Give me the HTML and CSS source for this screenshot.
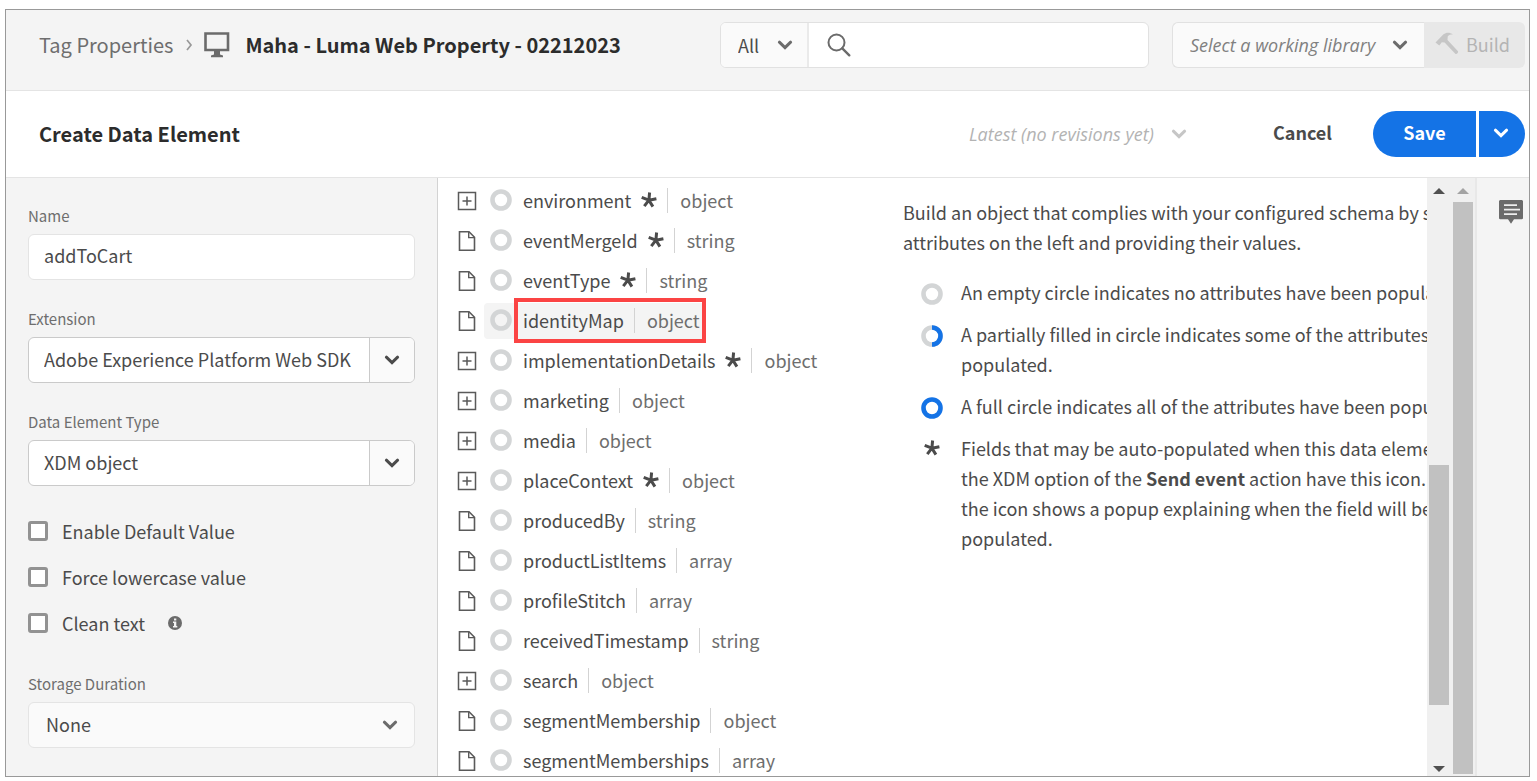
FILE: index.html
```html
<!DOCTYPE html>
<html lang="en">
<head>
<meta charset="utf-8">
<title>Create Data Element</title>
<link rel="stylesheet" href="styles.css">
</head>
<body>
<svg class="sprite" aria-hidden="true">
  <symbol id="chevron" viewBox="0 0 16 10"><path d="M2.4 2.2 8 7.6l5.600-5.400" fill="none" stroke="currentColor" stroke-width="3" stroke-linecap="round"/></symbol>
  <symbol id="plus" viewBox="0 0 20 20"><path d="M1.500 1.500h17v17h-17z" fill="none" stroke="currentColor" stroke-width="1.500"/><path d="M10 5.500v9M5.500 10h9" stroke="currentColor" stroke-width="1.500"/></symbol>
  <symbol id="file" viewBox="0 0 20 22"><path d="M2.500 1.800h9.500l5.500 5.500v12.900h-15z" fill="none" stroke="currentColor" stroke-width="1.600"/><path d="M11.700 2v5.600h5.600" fill="none" stroke="currentColor" stroke-width="1.400"/></symbol>
  <symbol id="ring" viewBox="0 0 22 22"><circle cx="11" cy="11" r="8.500" fill="none" stroke="currentColor" stroke-width="4.600"/></symbol>
  <symbol id="star" viewBox="0 0 16 16"><path d="M7.900 8.200 8.600.5M7.900 8.200l7.500-1.500M7.900 8.200l4 6.400M7.900 8.200l-4.600 6M7.900 8.200.7 5.300" fill="none" stroke="currentColor" stroke-width="3"/></symbol>
</svg>
<div class="frame">
  <header class="topbar">
    <nav class="crumbs" aria-label="Breadcrumb">
      <a href="#" class="crumb-link">Tag Properties</a>
      <svg class="crumb-sep" viewBox="0 0 8 12"><path d="m2 1 4 5-4 5" fill="none" stroke="#999" stroke-width="1.700"/></svg>
      <svg class="monitor" viewBox="0 0 28 26"><path d="M2.500 1.500h22.500v16.500H2.500z" fill="none" stroke="#6b6b6b" stroke-width="2.600"/><path d="M11 18h6v4.500l3 1v1.800H8v-1.800l3-1z" fill="#6b6b6b"/></svg>
      <strong class="crumb-current">Maha - Luma Web Property - 02212023</strong>
    </nav>
    <div class="search">
      <div class="pick search-scope">
        <select aria-label="Search scope"><option>All</option></select>
        <svg class="chevron"><use href="#chevron"/></svg>
      </div>
      <label class="search-box">
        <svg class="lens" viewBox="0 0 24 24"><circle cx="9.500" cy="9.500" r="8" fill="none" stroke="#6b6b6b" stroke-width="2"/><path d="m15.300 15.300 7 7" stroke="#6b6b6b" stroke-width="2.400" stroke-linecap="round"/></svg>
        <input type="search" aria-label="Search">
      </label>
    </div>
    <div class="library">
      <div class="pick library-pick">
        <select aria-label="Working library"><option>Select a working library</option></select>
        <svg class="chevron"><use href="#chevron"/></svg>
      </div>
      <button class="build" disabled>
        <svg class="hammer" viewBox="0 0 24 24"><path d="M.5 10.500 8.500 2.300C11 .2 14.500.1 18 2.300c-2.500 0-4.200.7-5.300 2.100L12.500 8 23 19.200c.8 1-1.500 3.600-2.700 2.600L9.600 10.500 6.800 10.300 4.300 13.500z" fill="#c6c6c6"/></svg>
        Build
      </button>
    </div>
  </header>

  <div class="titlebar">
    <h1>Create Data Element</h1>
    <div class="pick revision">
      <select aria-label="Revision" disabled><option>Latest (no revisions yet)</option></select>
      <svg class="chevron"><use href="#chevron"/></svg>
    </div>
    <button class="cancel">Cancel</button>
    <div class="save-group">
      <button class="save">Save</button>
      <button class="save-more" aria-label="More save options"><svg class="chevron"><use href="#chevron"/></svg></button>
    </div>
  </div>

  <div class="workspace">
    <form class="sidebar">
      <div class="field">
        <label for="name">Name</label>
        <input class="box text-box" id="name" type="text" value="addToCart">
      </div>
      <div class="field">
        <label for="extension">Extension</label>
        <div class="box combo">
          <input id="extension" type="text" value="Adobe Experience Platform Web SDK">
          <button type="button" aria-label="Show extensions"><svg class="chevron"><use href="#chevron"/></svg></button>
        </div>
      </div>
      <div class="field">
        <label for="type">Data Element Type</label>
        <div class="box combo">
          <input id="type" type="text" value="XDM object">
          <button type="button" aria-label="Show types"><svg class="chevron"><use href="#chevron"/></svg></button>
        </div>
      </div>
      <div class="checks">
        <label class="check"><input type="checkbox">Enable Default Value</label>
        <label class="check"><input type="checkbox">Force lowercase value</label>
        <label class="check"><input type="checkbox">Clean text
          <svg class="info" viewBox="0 0 14 14"><circle cx="7" cy="7" r="7" fill="#6b6b6b"/><path d="M6 2.500h2.300v2H6zM5 5.600h3.300v4.500h1v1.400H5v-1.400h1V7H5z" fill="#f4f4f4"/></svg>
        </label>
      </div>
      <div class="field">
        <label for="storage">Storage Duration</label>
        <div class="box pick storage">
          <select id="storage"><option>None</option></select>
          <svg class="chevron"><use href="#chevron"/></svg>
        </div>
      </div>
    </form>

    <main class="content">
      <ul class="tree">
        <li><svg class="branch"><use href="#plus"/></svg><button class="node"><svg class="ring"><use href="#ring"/></svg><span>environment</span><svg class="star"><use href="#star"/></svg><span class="kind">object</span></button></li>
        <li><svg class="leaf"><use href="#file"/></svg><button class="node"><svg class="ring"><use href="#ring"/></svg><span>eventMergeId</span><svg class="star"><use href="#star"/></svg><span class="kind">string</span></button></li>
        <li><svg class="leaf"><use href="#file"/></svg><button class="node"><svg class="ring"><use href="#ring"/></svg><span>eventType</span><svg class="star"><use href="#star"/></svg><span class="kind">string</span></button></li>
        <li><svg class="leaf"><use href="#file"/></svg><button class="node node-selected"><svg class="ring"><use href="#ring"/></svg><span>identityMap</span><span class="kind">object</span></button></li>
        <li><svg class="branch"><use href="#plus"/></svg><button class="node"><svg class="ring"><use href="#ring"/></svg><span>implementationDetails</span><svg class="star"><use href="#star"/></svg><span class="kind">object</span></button></li>
        <li><svg class="branch"><use href="#plus"/></svg><button class="node"><svg class="ring"><use href="#ring"/></svg><span>marketing</span><span class="kind">object</span></button></li>
        <li><svg class="branch"><use href="#plus"/></svg><button class="node"><svg class="ring"><use href="#ring"/></svg><span>media</span><span class="kind">object</span></button></li>
        <li><svg class="branch"><use href="#plus"/></svg><button class="node"><svg class="ring"><use href="#ring"/></svg><span>placeContext</span><svg class="star"><use href="#star"/></svg><span class="kind">object</span></button></li>
        <li><svg class="leaf"><use href="#file"/></svg><button class="node"><svg class="ring"><use href="#ring"/></svg><span>producedBy</span><span class="kind">string</span></button></li>
        <li><svg class="leaf"><use href="#file"/></svg><button class="node"><svg class="ring"><use href="#ring"/></svg><span>productListItems</span><span class="kind">array</span></button></li>
        <li><svg class="leaf"><use href="#file"/></svg><button class="node"><svg class="ring"><use href="#ring"/></svg><span>profileStitch</span><span class="kind">array</span></button></li>
        <li><svg class="leaf"><use href="#file"/></svg><button class="node"><svg class="ring"><use href="#ring"/></svg><span>receivedTimestamp</span><span class="kind">string</span></button></li>
        <li><svg class="branch"><use href="#plus"/></svg><button class="node"><svg class="ring"><use href="#ring"/></svg><span>search</span><span class="kind">object</span></button></li>
        <li><svg class="leaf"><use href="#file"/></svg><button class="node"><svg class="ring"><use href="#ring"/></svg><span>segmentMembership</span><span class="kind">object</span></button></li>
        <li><svg class="leaf"><use href="#file"/></svg><button class="node"><svg class="ring"><use href="#ring"/></svg><span>segmentMemberships</span><span class="kind">array</span></button></li>
      </ul>
      <section class="help">
        <p>Build an object that complies with your configured schema by selecting<br>attributes on the left and providing their values.</p>
        <ul class="legend">
          <li><svg class="ring"><use href="#ring"/></svg><p>An empty circle indicates no attributes have been populated.</p></li>
          <li><svg class="ring" viewBox="0 0 22 22"><circle cx="11" cy="11" r="8.500" fill="none" stroke="currentColor" stroke-width="4.600"/><path d="M11 2.500a8.500 8.500 0 0 1 0 17" fill="none" stroke="#1473e6" stroke-width="4.600"/></svg><p>A partially filled in circle indicates some of the attributes have been<br>populated.</p></li>
          <li><svg class="ring ring-full"><use href="#ring"/></svg><p>A full circle indicates all of the attributes have been populated.</p></li>
          <li><svg class="star"><use href="#star"/></svg><p>Fields that may be auto-populated when this data element is used in<br>the XDM option of the <b>Send event</b> action have this icon. Hovering over<br>the icon shows a popup explaining when the field will be auto-<br>populated.</p></li>
        </ul>
      </section>
    </main>

    <div class="scrollbar scrollbar-inner" aria-hidden="true">
      <svg class="arrow" viewBox="0 0 12 6"><path d="M0 6 6 0l6 6z" fill="#505050"/></svg>
      <div class="track"><div class="thumb"></div></div>
      <svg class="arrow" viewBox="0 0 12 6"><path d="m0 0 6 6 6-6z" fill="#505050"/></svg>
    </div>
    <div class="scrollbar scrollbar-outer" aria-hidden="true">
      <svg class="arrow" viewBox="0 0 12 6"><path d="M0 6 6 0l6 6z" fill="#a3a3a3"/></svg>
      <div class="track"><div class="thumb"></div></div>
    </div>
    <aside class="rail">
      <button aria-label="Notes"><svg class="note" viewBox="0 0 24 24"><path d="M1 0h22l1 1v17.500l-1 .7h-8L12 23.800 9 19.200H1l-1-.7V1z" fill="#6b6b6b"/><path d="M5 5.200h13M5 9.700h16M5 14.200h13" stroke="#eee" stroke-width="1.700"/></svg></button>
    </aside>
  </div>
</div>
</body>
</html>
```
FILE: styles.css
```css
*, *::before, *::after { box-sizing: border-box; }

body {
  margin: 0;
  height: 100vh;
  padding: 9px 7px 4px 5px;
  background: #fff;
  color: #4b4b4b;
  font: 18px/30px "Noto Sans CJK SC", "Open Sans", sans-serif;
}

button, input, select {
  margin: 0;
  padding: 0;
  border: 0;
  background: none;
  color: inherit;
  font: inherit;
  outline: 0;
}

select { appearance: none; opacity: 1; width: 100%; }
select:disabled { opacity: 1; color: inherit; }
p, ul, h1 { margin: 0; padding: 0; }
ul { list-style: none; }
svg { flex: none; display: block; }
b { font-weight: 600; }

.sprite { position: absolute; width: 0; height: 0; }
.chevron { width: 16px; height: 10px; color: #6b6b6b; }

.frame {
  height: 100%;
  display: flex;
  flex-direction: column;
  border: 1px solid #999;
  overflow: hidden;
}

/* Top bar */
.topbar {
  flex: none;
  display: flex;
  align-items: flex-start;
  height: 81px;
  padding: 12px 4px 0 33px;
  background: #f4f4f4;
  border-bottom: 1px solid #e4e4e4;
}

.crumbs {
  display: flex;
  align-items: center;
  height: 46px;
  margin-right: auto;
  font-size: 20px;
  white-space: nowrap;
}

.crumb-link { color: #6e6e6e; text-decoration: none; }
.crumb-sep { width: 8px; height: 12px; margin: 0 10px 0 12px; }
.monitor { width: 28px; height: 26px; margin-right: 14px; }
.crumb-current { color: #2c2c2c; font-weight: 600; }

.pick { display: flex; align-items: center; position: relative; }
.pick select { height: 100%; }
.pick .chevron { position: absolute; right: 16px; pointer-events: none; }

.search {
  display: flex;
  width: 429px;
  height: 46px;
  margin-right: 23px;
  border: 1px solid #e1e1e1;
  border-radius: 6px;
  background: #fff;
  overflow: hidden;
}

.search-scope { width: 88px; background: #fafafa; border-right: 2px solid #eaeaea; }
.search-scope .chevron { right: 14px; }
.search-scope select { padding-left: 17px; }
.search-box { flex: 1; display: flex; align-items: center; gap: 10px; padding-left: 18px; }
.search-box input { flex: 1; min-width: 0; }
.lens { width: 24px; height: 24px; }

.library { display: flex; width: 353px; height: 46px; }
.library-pick {
  flex: 1;
  background: #fafafa;
  border: 1px solid #e1e1e1;
  border-right: 0;
  border-radius: 6px 0 0 6px;
  color: #808080;
  font-family: "Open Sans", sans-serif;
  font-style: italic;
}
.library-pick select { padding-left: 17px; }

.build {
  display: flex;
  align-items: center;
  gap: 7px;
  width: 101px;
  padding: 0 0 2px 11px;
  border-radius: 0 6px 6px 0;
  background: #e8e8e8;
  color: #b4b4b4;
}
.hammer { width: 24px; height: 24px; }

/* Title bar */
.titlebar {
  flex: none;
  display: flex;
  align-items: center;
  height: 87px;
  padding: 0 4px 0 33px;
  border-bottom: 1px solid #e4e4e4;
}

h1 { margin-right: auto; color: #2c2c2c; font-size: 20px; line-height: 30px; font-weight: 600; }
.revision {
  width: 233px;
  color: #b3b3b3;
  font-family: "Open Sans", sans-serif;
  font-style: italic;
}
.pick.revision .chevron { color: #c6c6c6; right: 15px; }
.cancel { margin: 0 41px 0 71px; padding-bottom: 4px; font-weight: 600; }

.save-group { display: flex; gap: 3px; height: 46px; color: #fff; }
.save { width: 103px; padding-bottom: 4px; border-radius: 23px 0 0 23px; background: #1473e6; font-weight: 700; }
.save-more {
  display: grid;
  place-items: center;
  width: 46px;
  padding: 0 2px 2px 0;
  border-radius: 0 23px 23px 0;
  background: #1473e6;
}
.save-more .chevron { color: #fff; }

/* Workspace */
.workspace { flex: 1; min-height: 0; display: flex; }

.sidebar {
  flex: none;
  width: 432px;
  padding: 26px 22px 0;
  background: #f4f4f4;
  border-right: 1px solid #d3d3d3;
  overflow: hidden;
}

.field { margin-bottom: 27px; }
.field > label { display: block; height: 30px; color: #6e6e6e; font-size: 15px; line-height: 24px; }

.box {
  width: 100%;
  height: 46px;
  border: 1px solid #e4e4e4;
  border-radius: 6px;
  background: #fff;
  overflow: hidden;
}
.text-box { display: block; padding: 0 15px 4px; }
.combo { display: flex; border-color: #cacaca; }
.combo input { flex: 1; min-width: 0; padding: 0 0 3px 15px; }
.combo button {
  display: grid;
  place-items: center;
  width: 45px;
  background: #fafafa;
  border-left: 1px solid #cacaca;
}
.combo .chevron { color: #4b4b4b; }
.storage { background: #fafafa; }
.storage select { padding: 0 0 2px 17px; }

.checks { margin: -5px 0 26px; }
.check { display: flex; align-items: center; height: 46px; }
.check input {
  appearance: none;
  width: 20px;
  height: 20px;
  margin-right: 14px;
  border: 3px solid #929292;
  border-radius: 3px;
  background: #fff;
}
.info { width: 14px; height: 14px; margin-left: 23px; }

/* Schema tree */
.content {
  flex: 1;
  min-width: 0;
  display: grid;
  grid-template-columns: 465px 1fr;
  overflow: hidden;
}

.tree { padding: 3px 0 0 19px; }
.tree li { display: flex; align-items: center; height: 40px; color: #5a5a5a; }
.branch { width: 20px; height: 20px; margin-right: 7px; }
.leaf { width: 20px; height: 22px; margin-right: 7px; }

.node {
  position: relative;
  display: flex;
  align-items: center;
  height: 36px;
  padding: 0 6px 2px 6px;
  border-radius: 4px;
  color: #4b4b4b;
  white-space: nowrap;
}
.ring { width: 22px; height: 22px; color: #d3d5d6; }
.node .ring { margin-right: 11px; }
.star { width: 16px; height: 16px; color: #4b4b4b; }
.node .star { margin-left: 10px; }
.kind {
  margin-left: 10px;
  padding-left: 12px;
  border-left: 1px solid #d3d3d3;
  color: #6e6e6e;
  line-height: 25px;
}

.node-selected { background: #f4f4f4; }
.node-selected::after {
  content: "";
  position: absolute;
  inset: -5px 0 -4px 30px;
  border: 4px solid #fb4444;
}

/* Help */
.help { padding-top: 19px; white-space: nowrap; overflow: hidden; }
.legend { padding: 20px 0 0 18px; }
.legend li { display: flex; gap: 18px; margin-bottom: 12px; }
.legend .ring { margin-top: 6px; }
.legend .ring-full { color: #1473e6; }
.legend .star { margin: 7px 3px 0; }

/* Scroll bars */
.scrollbar {
  flex: none;
  display: flex;
  flex-direction: column;
  align-items: center;
  width: 24px;
  padding: 10px 0 2px;
  background: #f0f0f0;
}
.arrow { width: 12px; height: 6px; }
.track { flex: 1; width: 20px; display: flex; flex-direction: column; }
.thumb { background: #c1c1c1; }
.scrollbar-inner .track { justify-content: flex-end; }
.scrollbar-inner .thumb { height: 42%; margin-bottom: 61px; }
.scrollbar-inner .arrow:last-child { margin-bottom: 2px; }
.scrollbar-outer .track { padding-top: 8px; }
.scrollbar-outer .thumb { flex: 1; }

.rail {
  flex: none;
  width: 54px;
  padding: 22px 0 0 22px;
  background: #f4f4f4;
  border-left: 2px solid #e8e8e8;
}
.note { width: 24px; height: 24px; }
```
